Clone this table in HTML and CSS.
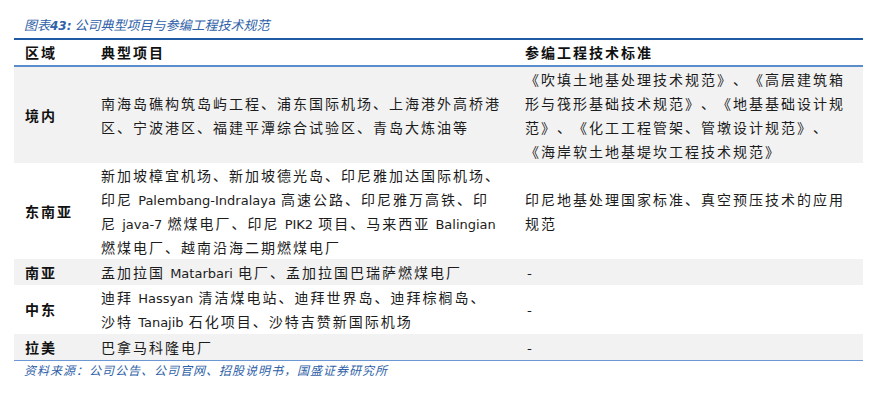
FILE: index.html
```html
<!DOCTYPE html>
<html lang="zh-CN">
<head>
<meta charset="utf-8">
<title>图表43</title>
<link rel="stylesheet" href="styles.css">
</head>
<body>
<div class="page">
  <div class="caption">图表<span class="cap-num">43:</span> 公司典型项目与参编工程技术规范</div>
  <div class="table">
    <div class="row head">
      <div class="c1">区域</div>
      <div class="c2">典型项目</div>
      <div class="c3">参编工程技术标准</div>
    </div>
    <div class="row shade tall">
      <div class="c1 lbl">境内</div>
      <div class="c2">南海岛礁构筑岛屿工程、浦东国际机场、上海港外高桥港<br>区、宁波港区、福建平潭综合试验区、青岛大炼油等</div>
      <div class="c3">《吹填土地基处理技术规范》、《高层建筑箱<br>形与筏形基础技术规范》、《地基基础设计规<br>范》、《化工工程管架、管墩设计规范》、<br>《海岸软土地基堤坎工程技术规范》</div>
    </div>
    <div class="row tall">
      <div class="c1 lbl">东南亚</div>
      <div class="c2">新加坡樟宜机场、新加坡德光岛、印尼雅加达国际机场、<br>印尼 <span class="lat">Palembang-Indralaya</span> 高速公路、印尼雅万高铁、印<br>尼 <span class="lat">java-7</span> 燃煤电厂、印尼 <span class="lat">PIK2</span> 项目、马来西亚 <span class="lat">Balingian</span><br>燃煤电厂、越南沿海二期燃煤电厂</div>
      <div class="c3">印尼地基处理国家标准、真空预压技术的应用<br>规范</div>
    </div>
    <div class="row shade">
      <div class="c1 lbl">南亚</div>
      <div class="c2">孟加拉国 <span class="lat">Matarbari</span> 电厂、孟加拉国巴瑞萨燃煤电厂</div>
      <div class="c3 dash">-</div>
    </div>
    <div class="row mid">
      <div class="c1 lbl">中东</div>
      <div class="c2">迪拜 <span class="lat">Hassyan</span> 清洁煤电站、迪拜世界岛、迪拜棕榈岛、<br>沙特 <span class="lat">Tanajib</span> 石化项目、沙特吉赞新国际机场</div>
      <div class="c3 dash">-</div>
    </div>
    <div class="row shade">
      <div class="c1 lbl">拉美</div>
      <div class="c2">巴拿马科隆电厂</div>
      <div class="c3 dash">-</div>
    </div>
  </div>
  <div class="source">资料来源：公司公告、公司官网、招股说明书，国盛证券研究所</div>
</div>
</body>
</html>
```

FILE: styles.css
```css
html, body {
  margin: 0;
  padding: 0;
  background: #ffffff;
}

.page {
  padding: 16px 9px 0 14px;
  font-family: "Noto Sans CJK SC", "Noto Sans", sans-serif;
  color: #1c1c1c;
  text-spacing-trim: space-all;
}

.caption {
  padding-left: 10px;
  height: 22px;
  line-height: 18px;
  font-size: 13px;
  font-style: italic;
  color: #2f62a8;
  white-space: nowrap;
}

.cap-num {
  font-family: "DejaVu Sans", sans-serif;
  font-size: 12px;
  font-weight: bold;
}

.table {
  border-top: 2px solid #1f5aa4;
  border-bottom: 1.5px solid #6b98d4;
}

.row {
  display: grid;
  grid-template-columns: 87px 424px 1fr;
  align-items: center;
  padding: 1px 0;
  font-size: 14px;
  line-height: 24px;
  letter-spacing: 2px;
  white-space: nowrap;
}

.row.tall {
  padding: 0;
}

.row.mid {
  padding: 0 0 1px;
}

.row.head {
  height: 25px;
  padding: 0;
  font-weight: bold;
  line-height: 25px;
  border-bottom: 2px solid #5b8ccc;
  color: #111111;
}

.row.shade {
  background: #f2f2f2;
}

.c1 {
  padding-left: 11px;
}

.lbl {
  font-weight: bold;
  color: #111111;
}

.c3.dash {
  padding-left: 2px;
}

.lat {
  font-family: "DejaVu Sans", sans-serif;
  font-size: 13px;
  line-height: 0;
  letter-spacing: 0;
}

.source {
  padding-left: 10px;
  line-height: 18px;
  font-size: 12px;
  letter-spacing: 1px;
  font-style: italic;
  color: #2f62a8;
  white-space: nowrap;
}
```
